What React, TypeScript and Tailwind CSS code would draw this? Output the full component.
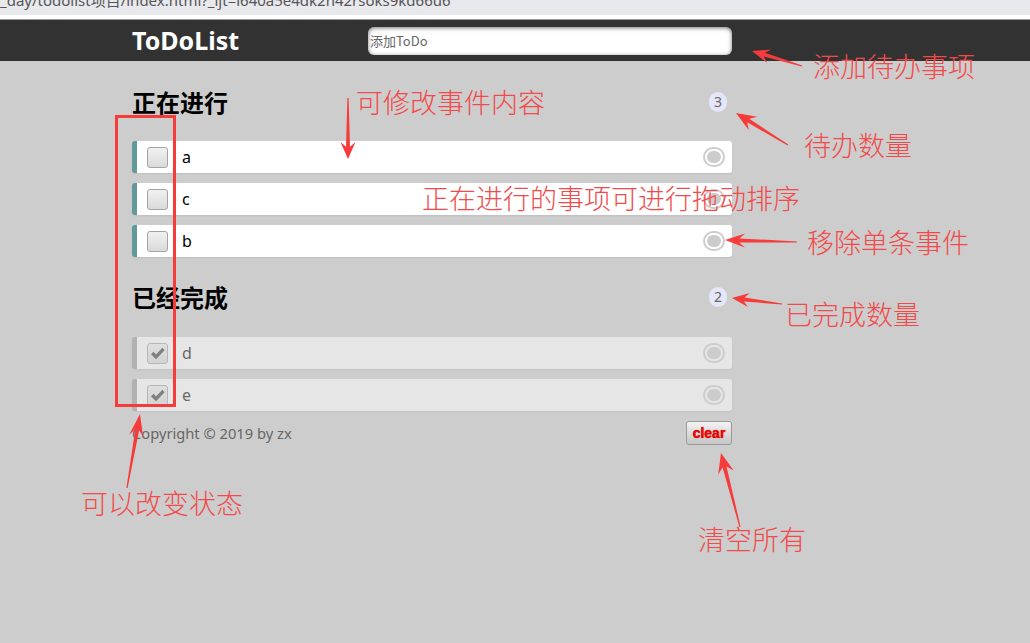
import React from "react";

type Arrow = { x1: number; y1: number; x2: number; y2: number; hl: number; hw: number; nw?: number; tw?: number };

function arrowPoints(a: Arrow): string {
  const { x1, y1, x2, y2, hl, hw } = a;
  const nw = a.nw ?? 4;
  const tw = a.tw ?? 1.2;
  const dx = x2 - x1;
  const dy = y2 - y1;
  const len = Math.hypot(dx, dy);
  const ux = dx / len;
  const uy = dy / len;
  const px = -uy;
  const py = ux;
  const bx = x2 - ux * hl;
  const by = y2 - uy * hl;
  const nx = x2 - ux * hl * 0.72;
  const ny = y2 - uy * hl * 0.72;
  const pts: [number, number][] = [
    [x1 + (px * tw) / 2, y1 + (py * tw) / 2],
    [nx + (px * nw) / 2, ny + (py * nw) / 2],
    [bx + (px * hw) / 2, by + (py * hw) / 2],
    [x2, y2],
    [bx - (px * hw) / 2, by - (py * hw) / 2],
    [nx - (px * nw) / 2, ny - (py * nw) / 2],
    [x1 - (px * tw) / 2, y1 - (py * tw) / 2],
  ];
  return pts.map((p) => `${p[0].toFixed(1)},${p[1].toFixed(1)}`).join(" ");
}

const arrows: Arrow[] = [
  { x1: 802, y1: 66, x2: 752, y2: 51, hl: 18, hw: 14 },
  { x1: 348, y1: 98, x2: 348, y2: 159, hl: 17, hw: 15 },
  { x1: 788, y1: 145, x2: 736, y2: 113, hl: 20, hw: 16 },
  { x1: 797, y1: 242, x2: 725, y2: 240, hl: 20, hw: 14 },
  { x1: 782, y1: 304, x2: 732, y2: 298, hl: 17, hw: 14 },
  { x1: 127, y1: 488, x2: 140, y2: 414, hl: 22, hw: 14 },
  { x1: 740, y1: 527, x2: 721, y2: 453, hl: 20, hw: 16 },
];

const labels: { text: string; left: number; top: number }[] = [
  { text: "添加待办事项", left: 813, top: 52 },
  { text: "可修改事件内容", left: 356, top: 88 },
  { text: "待办数量", left: 804, top: 131 },
  { text: "正在进行的事项可进行拖动排序", left: 422, top: 184 },
  { text: "移除单条事件", left: 807, top: 228 },
  { text: "已完成数量", left: 785, top: 300 },
  { text: "可以改变状态", left: 81, top: 489 },
  { text: "清空所有", left: 698, top: 525 },
];

function RemoveBtn() {
  return (
    <span className="ml-auto mr-[5px] box-content block w-[14px] h-[12px] rounded-[14px] border-[6px] border-double border-white bg-[#cccccc]" />
  );
}

function Item({ text, done }: { text: string; done?: boolean }) {
  return (
    <li
      className={
        "flex items-center h-[32px] bg-white rounded-[3px] border-l-[5px] shadow-[0_1px_2px_rgba(0,0,0,0.07)] " +
        (done ? "border-[#999999] opacity-50" : "border-[#629a9c]")
      }
    >
      <span className="ml-[10px] flex items-center justify-center w-[21px] h-[21px] rounded-[3px] border border-[#a3a3a3] bg-linear-to-b from-[#f1f1f1] to-[#dadada]">
        {done ? (
          <svg width="15" height="13" viewBox="0 0 15 13">
            <path d="M1 7.2 L3.6 4.8 L6 7.4 L12.4 0.8 L14.6 3.2 L6 12.2 Z" fill="#333" />
          </svg>
        ) : null}
      </span>
      <span className="ml-[14px] text-[16px] text-black" style={{ fontFamily: '"Noto Sans", "Liberation Sans", sans-serif' }}>
        {text}
      </span>
      <RemoveBtn />
    </li>
  );
}

function Heading({ title, count, className }: { title: string; count: number; className?: string }) {
  return (
    <div className={"flex items-center justify-between h-[32px] " + (className ?? "")}>
      <h2 className="text-[24px] font-bold text-black leading-[32px]" style={{ fontFamily: '"Noto Sans CJK SC", sans-serif' }}>
        {title}
      </h2>
      <span className="mr-[5px] h-[20px] px-[5px] rounded-full bg-[#e6e6fa] text-[#666666] text-[14px] leading-[20px]">
        {count}
      </span>
    </div>
  );
}

export default function App() {
  return (
    <div
      className="relative w-[1030px] h-[643px] overflow-hidden bg-[#cdcdcd]"
      style={{ fontFamily: '"Noto Sans", "Noto Sans CJK SC", sans-serif' }}
    >
      <div className="h-[15px] bg-[#e8e9ed] overflow-hidden">
        <div className="-mt-[10px] text-[15px] leading-[20px] text-[#555] whitespace-nowrap" style={{ fontFamily: '"Noto Sans", "Noto Sans CJK SC", sans-serif' }}>
          _day/todolist项目/index.html?_ijt=l640a5e4dk2n42rsoks9kd66u6
        </div>
      </div>
      <div className="h-[4px] bg-white" />
      <div className="h-[1px] bg-[#9a9a9a]" />
      <header className="h-[41px] bg-[#323232]">
        <div className="ml-[132px] w-[600px] h-full flex items-center justify-between">
          <h1 className="text-[25px] font-bold text-white leading-none -mt-[1px]" style={{ fontFamily: '"Noto Sans", sans-serif' }}>
            ToDoList
          </h1>
          <input
            className="w-[364px] h-[28px] rounded-[6px] bg-white pl-[2px] text-[13px] outline-none shadow-[inset_0_1px_4px_rgba(0,0,0,0.55)] placeholder:text-[#666]"
            placeholder="添加ToDo"
            style={{ fontFamily: '"Noto Sans CJK SC", sans-serif' }}
          />
        </div>
      </header>

      <main className="ml-[132px] w-[600px] pt-[25px]">
        <Heading title="正在进行" count={3} />
        <ul className="mt-[23px] flex flex-col gap-[10px]">
          <Item text="a" />
          <Item text="c" />
          <Item text="b" />
        </ul>
        <Heading title="已经完成" count={2} className="mt-[24px]" />
        <ul className="mt-[24px] flex flex-col gap-[10px]">
          <Item text="d" done />
          <Item text="e" done />
        </ul>
        <footer className="mt-[10px] h-[24px] flex items-center justify-between">
          <span className="text-[14.7px] text-[#666666]">Copyright © 2019 by zx</span>
          <button className="w-[46px] h-[24px] rounded-[3px] border border-[#9a9a9a] bg-linear-to-b from-[#f3f3f3] to-[#c6c6c6] text-[14px] font-bold text-[#ff0000] leading-none [text-shadow:0_0_1px_#700]" style={{ fontFamily: '"Liberation Sans", sans-serif' }}>
            clear
          </button>
        </footer>
      </main>

      <div className="absolute inset-0 pointer-events-none">
        <svg className="absolute inset-0" width="1030" height="643" viewBox="0 0 1030 643">
          <rect x="116.5" y="116.5" width="58" height="289" fill="none" stroke="#f63b3b" strokeWidth="3" />
          {arrows.map((a, i) => (
            <polygon key={i} points={arrowPoints(a)} fill="#f63b3b" />
          ))}
        </svg>
        {labels.map((l) => (
          <div
            key={l.text}
            className="absolute text-[27px] font-light leading-none text-[#f24a4a] whitespace-nowrap"
            style={{ left: l.left, top: l.top, fontFamily: '"Noto Sans CJK SC", sans-serif' }}
          >
            {l.text}
          </div>
        ))}
      </div>
    </div>
  );
}
